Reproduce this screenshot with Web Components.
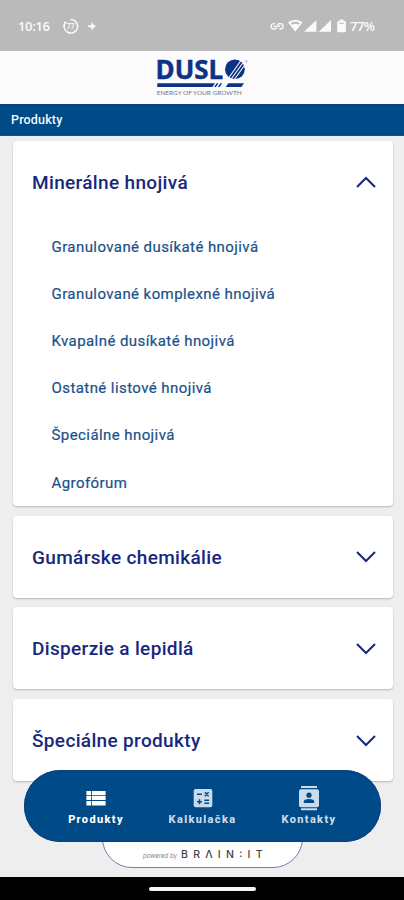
<!DOCTYPE html>
<html lang="sk">
<head>
<meta charset="utf-8">
<title>Duslo – Produkty</title>
<style>
html, body { margin: 0; height: 100%; }
body { font-family: Roboto, "Noto Sans", sans-serif; background: #eeeeee; overflow: hidden; }
</style>
</head>
<body>
<duslo-app></duslo-app>
<script>
const define = (name, html) => {
  const t = document.createElement('template');
  t.innerHTML = html;
  customElements.define(name, class extends HTMLElement {
    constructor() {
      super();
      this.attachShadow({ mode: 'open' }).appendChild(t.content.cloneNode(true));
    }
  });
};

define('status-bar', `
<style>
:host { display: flex; justify-content: space-between; height: 51px; box-sizing: border-box; padding: 1px 27px 0 18px; background: #bababa; color: #fafafa; font: 600 13px/51px "Open Sans", sans-serif; align-items: center; }
div { display: flex; align-items: center; }
.time { letter-spacing: -.35px; width: 44px; white-space: nowrap; }
svg { display: block; fill: #fafafa; }
</style>
<div>
  <span class="time">10:16</span>
  <svg width="36" height="18" viewBox="62 17 36 18">
    <path d="M66 21.2A6.8 6.8 0 1 0 70.5 19.2" fill="none" stroke="#fafafa" stroke-width="1.5" transform="translate(0 .3)"/>
    <path d="M63.2 25.2l1.6 1.2M64.3 22l1.4 1" stroke="#fafafa" stroke-width="1.3"/>
    <text x="70.4" y="29.1" font-size="8" font-weight="600" text-anchor="middle" textLength="8" lengthAdjust="spacingAndGlyphs">77</text>
    <path d="M92.3 22l1.3 2.9 2.9 1.3-2.9 1.3-1.3 2.9-1.3-2.9-2.9-.5v-1.6l2.9-.5z"/>
  </svg>
</div>
<div>
  <svg width="79" height="18" viewBox="270 17 79 18">
    <g fill="none" stroke="#fafafa" stroke-width="1.4"><path d="M276 23.6h-1.2a2.7 2.7 0 0 0 0 5.4h1.6l3.3-5.4h1.7a2.7 2.7 0 0 1 0 5.4h-1.2M274.6 26.3h2M279.4 26.3h2"/></g>
    <path d="M289 22.2q7.3-5 14.6 0l-7.3 9.6z"/>
    <path d="M291.8 22.9q4.5-2.5 9 0l-1.4 1.8q-3.1-1.7-6.2 0z" fill="#bababa"/>
    <path d="M305 31.8L317.4 20v11.8zM319.8 31.8L332 20v11.8z"/>
    <path d="M340.6 19.5h4v1.6h1.5q.8 0 .8.8v9.6q0 .8-.8.8h-7q-.8 0-.8-.8v-9.6q0-.8.8-.8h1.5z"/>
    <path d="M340.4 22.8h4.4v1h-4.4z" fill="#bababa"/>
  </svg>
  <span style="margin-left:2px;letter-spacing:-.5px;width:27px;white-space:nowrap">77%</span>
</div>`);

define('brand-header', `
<style>
:host { display: flex; justify-content: center; height: 53px; background: #fbfbfb; }
svg { display: block; }
</style>
<svg width="404" height="53" viewBox="0 51 404 53" fill="#0d3287">
  <text x="155.6" y="78.8" font-family="Open Sans" font-weight="700" font-size="26" stroke="#0d3287" stroke-width=".5" textLength="67.5" lengthAdjust="spacingAndGlyphs">DUSL</text>
  <circle cx="234.9" cy="69.3" r="9.9"/>
  <g stroke="#fbfbfb" stroke-width="1.1"><path d="M227.5 79.5L241 60.5M230.8 79.5L243.5 62M234.3 79.5L245.5 64"/></g>
  <circle cx="246.3" cy="61.3" r="1" fill="none" stroke="#8d9cc4" stroke-width=".6"/>
  <path d="M157.3 83.2H215l-2.6 3.7h-55.1zM216.7 83.2h1.8l-2.6 3.7h-1.8zM220.4 83.2h1.8l-2.6 3.7h-1.8zM228.3 83.2H244l-2.6 3.7H225.7z"/>
  <text x="156.7" y="95.2" font-family="Lato" font-size="6" fill="#74777e" textLength="85" lengthAdjust="spacingAndGlyphs">ENERGY OF YOUR GROWTH</text>
</svg>`);

define('page-title', `
<style>
:host { display: block; height: 32px; box-sizing: border-box; padding-left: 11px; background: #004b87; border-top: 1px solid #0b3d83; border-bottom: 1px solid #1d4b90; color: #f4f8fc; font-size: 12.5px; font-weight: 500; line-height: 30px; letter-spacing: .16px; }
</style><slot></slot>`);

define('product-card', `
<style>
:host { display: block; box-sizing: border-box; background: #fff; border-radius: 4px; box-shadow: 0 1px 2px rgba(0,0,0,.24); height: 82px; }
:host([open]) { height: 365px; }
header { display: flex; align-items: center; justify-content: space-between; height: 82px; box-sizing: border-box; padding: 1.5px 17px 0 19.5px; color: #18277e; font-size: 19px; font-weight: 500; letter-spacing: .34px; }
:host([open]) header { padding-top: 0; }
:host([open]) svg { transform: scaleY(-1); }
.list { display: flex; flex-direction: column; padding-top: .6px; }
:host(:not([open])) .list { display: none; }
</style>
<header><slot name="title"></slot>
<svg width="20" height="12" viewBox="0 0 20 12"><path d="M1 1l9 9 9-9" fill="none" stroke="#18277e" stroke-width="2"/></svg></header>
<div class="list"><slot></slot></div>`);

define('product-link', `
<style>
:host { display: block; height: 47.2px; line-height: 47.2px; padding-left: 39px; color: #1a5189; font-size: 15px; font-weight: 400; letter-spacing: .42px; -webkit-text-stroke: .2px #1a5189; }
</style><slot></slot>`);

define('tab-item', `
<style>
:host { display: flex; flex-direction: column; align-items: center; width: 106.5px; color: #c8dcee; font-size: 11px; font-weight: 800; letter-spacing: 1.35px; line-height: 14px; }
:host([active]) { color: #fff; }
.icon { height: 26px; display: flex; align-items: center; margin-bottom: 2px; }
</style>
<div class="icon"><slot name="icon"></slot></div><span><slot></slot></span>`);

define('tab-bar', `
<style>
:host { display: flex; justify-content: center; box-sizing: border-box; width: 357px; height: 72px; padding-top: 15px; border-radius: 36px; background: #004b87; box-shadow: inset 0 0 0 1px #0b4184; }
</style><slot></slot>`);

define('powered-badge', `
<style>
:host { display: block; box-sizing: border-box; width: 201px; height: 60px; border: 1px solid #7182ab; border-radius: 30px; background: #fff; }
svg { display: block; }
</style>
<svg width="199" height="58" viewBox="103 809 199 58">
  <text x="143" y="857.8" font-family="Inter" font-style="italic" font-size="6.6" fill="#888" textLength="34" lengthAdjust="spacingAndGlyphs">powered by</text>
  <text x="181" y="858.2" font-family="Inter" font-weight="500" font-size="10.5" fill="#444" textLength="81.5">BRΛIN:IT</text>
</svg>`);

define('gesture-bar', `
<style>
:host { display: flex; justify-content: center; box-sizing: border-box; height: 23px; background: #000; padding-top: 10px; }
i { width: 107px; height: 4px; border-radius: 2px; background: #f4f4f4; }
</style><i></i>`);

define('duslo-app', `
<style>
:host { display: flex; flex-direction: column; position: relative; width: 404px; height: 900px; overflow: hidden; background: #eeeeee; }
main { flex: 1; min-height: 0; display: flex; flex-direction: column; gap: 9.6px; padding: 5px 11px 0 12.5px; overflow: hidden; }
main > * { flex: none; }
powered-badge { position: absolute; left: 102px; top: 808px; }
tab-bar { position: absolute; left: 24px; top: 770px; }
svg { display: block; }
</style>
<status-bar></status-bar>
<brand-header></brand-header>
<page-title>Produkty</page-title>
<main>
  <product-card open><span slot="title">Minerálne hnojivá</span>
    <product-link>Granulované dusíkaté hnojivá</product-link>
    <product-link>Granulované komplexné hnojivá</product-link>
    <product-link>Kvapalné dusíkaté hnojivá</product-link>
    <product-link>Ostatné listové hnojivá</product-link>
    <product-link>Špeciálne hnojivá</product-link>
    <product-link>Agrofórum</product-link>
  </product-card>
  <product-card><span slot="title">Gumárske chemikálie</span></product-card>
  <product-card><span slot="title">Disperzie a lepidlá</span></product-card>
  <product-card><span slot="title">Špeciálne produkty</span></product-card>
</main>
<gesture-bar></gesture-bar>
<powered-badge></powered-badge>
<tab-bar>
  <tab-item active><svg slot="icon" width="20" height="16" viewBox="0 0 20 16" fill="#fff"><path d="M.4 .9h4.8v4.3H.4zM6 .9h13.6v4.3H6zM.4 6h4.8v4.1H.4zM6 6h13.6v4.1H6zM.4 10.9h4.8v4.5H.4zM6 10.9h13.6v4.5H6z"/></svg>Produkty</tab-item>
  <tab-item><svg slot="icon" width="20" height="20" viewBox="0 0 20 20"><rect x=".7" y="1" width="18.6" height="18.3" rx="2" fill="#c8dcee"/><path d="M4 6.3h5M11.8 4.3l3.8 3.8M15.6 4.3l-3.8 3.8M4 13.7h5M6.5 11.2v5M11.3 12.3h4.8M11.3 15.2h4.8" stroke="#004b87" stroke-width="1.5"/></svg>Kalkulačka</tab-item>
  <tab-item><svg slot="icon" width="20" height="26" viewBox="0 0 20 26"><path d="M2 1h16v2H2zM2 23.2h16v2H2z" fill="#c8dcee"/><rect y="4.2" width="20" height="18" rx="2" fill="#c8dcee"/><circle cx="10" cy="10.2" r="2.6" fill="#004b87"/><path d="M4.8 18v-1.5q0-2.6 5.2-2.6t5.2 2.6V18z" fill="#004b87"/></svg>Kontakty</tab-item>
</tab-bar>`);
</script>
</body>
</html>
